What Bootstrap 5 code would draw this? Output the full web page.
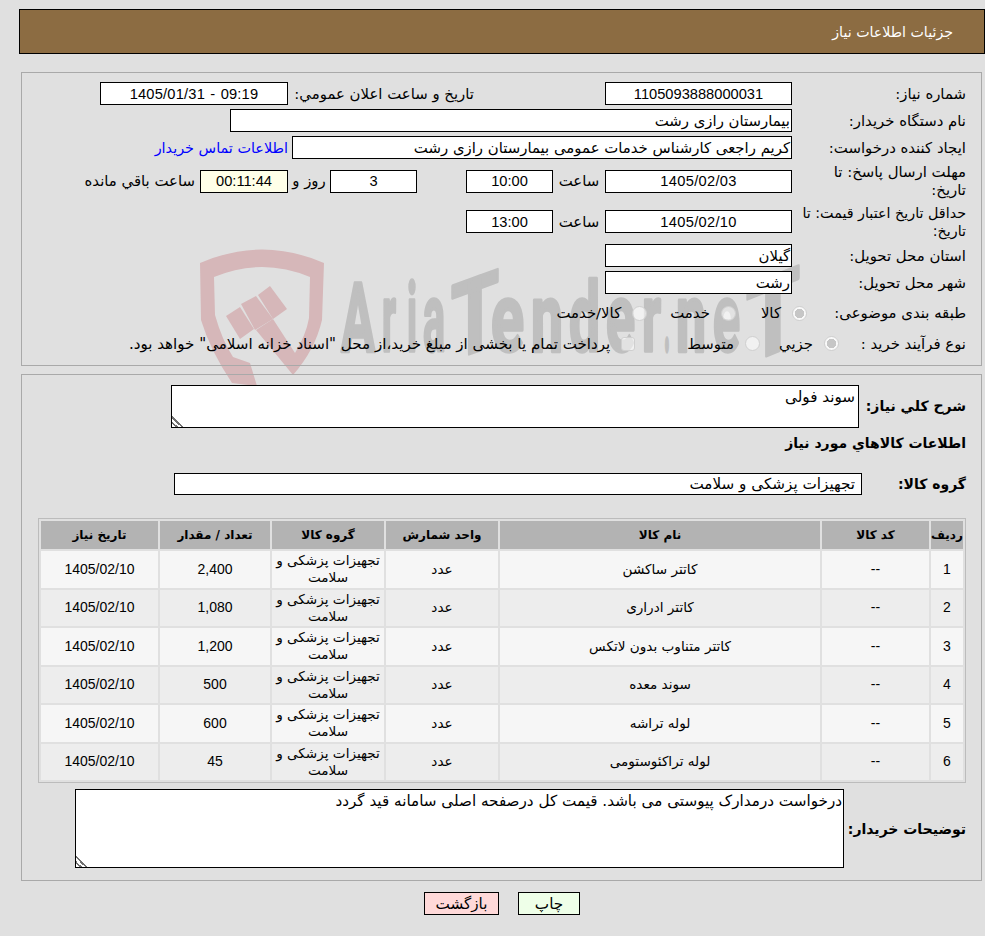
<!DOCTYPE html>
<html lang="fa" dir="rtl">
<head>
<meta charset="utf-8">
<title>جزئیات اطلاعات نیاز</title>
<link href="https://cdn.jsdelivr.net/npm/bootstrap@5.3.0/dist/css/bootstrap.min.css" rel="stylesheet">
<style>
html,body{background:#e0e0e0}
body{font-family:"DejaVu Sans",Tahoma,sans-serif;font-size:14.9px;line-height:18px;color:#000;position:relative;height:936px;overflow:hidden}
.wm{position:absolute;left:195px;top:245px;z-index:0}
.page{position:relative;z-index:1;padding-top:9px}
.headbar{margin:0 0 18px 0;margin-left:19px;height:45px;background:#8c6c42;border:1px solid #000;color:#fff;padding-right:31px;font-size:14.2px}
.panel1,.panel2{margin-left:21px;margin-right:3px;border:1px solid #a9a9a9;padding-right:15px}
.panel1{padding-top:9px;height:294px;margin-bottom:8px}
.panel2{height:507px;padding-top:10px}
.frow{gap:0;min-height:23px;margin-bottom:4px}
.lbl{width:163px;margin-left:11px;flex:none}
.lblw{width:174px;flex:none;font-size:14.3px}
.box{background:#fff;border:1px solid #000;height:23px;flex:none;display:flex;align-items:center;padding:0 1px;white-space:nowrap}
.num{font-size:14.67px;font-family:"Liberation Sans",sans-serif;justify-content:center}
.dt{letter-spacing:.3px}
.stamp{direction:ltr;word-spacing:1px;letter-spacing:.2px}
.b187{width:187px}.b87{width:87px}.b88{width:88px}.b188{width:188px}
.b562{width:562px}.b500{width:500px}
.tall4{height:36px}.tall5{height:37px}
.pub{margin-right:131px;width:186px;white-space:nowrap}
.hr{width:52px;text-align:center;flex:none}
.gap49{margin-left:49px}
.rz{width:42px;text-align:center;flex:none}
.ml5{margin-right:5px;white-space:nowrap}
.blue{color:#00f;text-decoration:none;margin-right:4px;white-space:nowrap;font-size:14.4px}
.timer{background:#ffffe8}
.r8{height:30px}.r9{height:22px;margin-bottom:0}
.lb8{width:159px;flex:none;white-space:nowrap}.lb9{width:127px;flex:none;white-space:nowrap}
.rad,.chk{appearance:none;-webkit-appearance:none;width:15px;height:15px;flex:none;margin:0;background:rgba(255,255,255,.55);border:1px solid #cfcfcf}
.rad{border-radius:50%}
.chk{border-radius:3px;width:14px;height:14px}
.rad:checked{background:radial-gradient(circle,#c6c6c6 0 4.5px,rgba(255,255,255,.8) 5px)}
.t{white-space:nowrap}
.m2{margin-right:11px}
.s82{margin-right:25px}.s83{margin-right:23px}
.s92{margin-right:19px}.s93{margin-right:52px}
.long{font-size:15.1px}
.bl{font-weight:700;font-size:14px;white-space:nowrap}
.ta{display:block;background:#fff;border:1px solid #000;border-radius:0;font:inherit;font-size:15.2px;color:#000;padding:2px;margin:0;outline:0;direction:rtl;flex:none}
.ta::-webkit-resizer{background:linear-gradient(45deg,transparent 0 12%,#707070 12% 20%,transparent 20% 30%,#707070 30% 38%,transparent 38%)}
.ta1{width:688px;height:43px;padding-right:3px}
.lbw{width:107px;flex:none;margin-top:-2px}
.head2{height:30px;margin-top:0}
.grow2{margin-top:15px;height:22px}
.lbg{width:104px;flex:none}
.grp{width:688px;height:22px;padding-right:6px;font-size:15.2px}
.tw{width:928px;margin:23px 0 0 0;border:1px solid #bcbcbc;border-collapse:separate;border-spacing:2px;table-layout:fixed}
.tw th{background:#b3b3b3;height:28px;padding:0;font-size:12px;text-align:center;vertical-align:middle}
.tw td{height:36.5px;padding:0;text-align:center;vertical-align:middle;font-size:13.6px;line-height:17px}
.tw tr.o td{background:#f6f6f6}
.tw tr.e td{background:#ededed}
.tw td.n{font-family:"Liberation Sans",sans-serif;font-size:14px}
.drow{margin-top:6px}
.ta2{width:769px;height:79px;padding:2px 1px}
.lbd{width:122px;flex:none;margin-top:0}
.btns{margin-top:11px;gap:19px;padding-left:19px}
.bt{height:23px;border:1px solid #000;border-radius:0;padding:0;font:inherit;font-size:15.2px;color:#000}
.bp{width:62px;background:#eeffe8}
.bb{width:75px;background:#ffd9d9}
</style>
</head>
<body>
<svg class="wm" width="620" height="145" viewBox="195 245 620 145" aria-hidden="true">
  <g fill="#d6b7b9">
    <path d="M200 263Q262 236 324 263L322 320Q315 350 293 375L256 330L273 319L295 353Q306 335 309 318L310 277Q262 257 214 277L215 315Q222 340 233 357L250 363L257 386L232 383Q210 350 201 320Z"/>
    <path d="M226 316L240 307L254 329L240 339Z"/>
    <path d="M241 304L256 296L273 319L255 330Z"/>
    <path d="M258 295L270 286L287 309L273 319Z"/>
  </g>
  <g fill="#bfbfbf" stroke="#bfbfbf" stroke-width="3.5" stroke-linejoin="round" font-family="Roboto,'Liberation Sans',sans-serif" font-weight="700" font-size="96">
    <text x="341" y="351" direction="ltr" textLength="34" lengthAdjust="spacingAndGlyphs">A</text>
    <text x="382" y="351" direction="ltr" textLength="14" lengthAdjust="spacingAndGlyphs">r</text>
    <text x="407" y="351" direction="ltr" textLength="10" lengthAdjust="spacingAndGlyphs">i</text>
    <text x="423" y="351" direction="ltr" textLength="22" lengthAdjust="spacingAndGlyphs">a</text>
    <text x="451" y="351" direction="ltr" font-size="104" textLength="48" lengthAdjust="spacingAndGlyphs" transform="translate(477 351) skewY(-20) translate(-477 -351)">T</text>
    <text x="491" y="351" direction="ltr" textLength="33" lengthAdjust="spacingAndGlyphs">e</text>
    <text x="531" y="351" direction="ltr" textLength="32" lengthAdjust="spacingAndGlyphs">n</text>
    <text x="569" y="351" direction="ltr" textLength="31" lengthAdjust="spacingAndGlyphs">d</text>
    <text x="606" y="351" direction="ltr" textLength="29" lengthAdjust="spacingAndGlyphs">e</text>
    <text x="642" y="351" direction="ltr" textLength="19" lengthAdjust="spacingAndGlyphs">r</text>
    <text x="664" y="351" direction="ltr" textLength="6" lengthAdjust="spacingAndGlyphs">.</text>
    <text x="676" y="351" direction="ltr" textLength="30" lengthAdjust="spacingAndGlyphs">n</text>
    <text x="713" y="351" direction="ltr" textLength="27" lengthAdjust="spacingAndGlyphs">e</text>
    <text x="746" y="351" direction="ltr" font-size="108" textLength="54" lengthAdjust="spacingAndGlyphs" transform="translate(778 351) skewY(-22) translate(-778 -351)">T</text>
  </g>
</svg>
<div class="page">
  <div class="headbar d-flex align-items-center">جزئیات اطلاعات نیاز</div>

  <div class="panel1">
    <div class="d-flex align-items-center frow">
      <div class="lbl">شماره نیاز:</div>
      <div class="box b187 num">1105093888000031</div>
      <div class="pub">تاریخ و ساعت اعلان عمومي:</div>
      <div class="box b188 num stamp">1405/01/31 - 09:19</div>
    </div>
    <div class="d-flex align-items-center frow">
      <div class="lbl">نام دستگاه خریدار:</div>
      <div class="box b562">بیمارستان رازی رشت</div>
    </div>
    <div class="d-flex align-items-center frow">
      <div class="lbl">ایجاد کننده درخواست:</div>
      <div class="box b500">کریم راجعی کارشناس خدمات عمومی بیمارستان رازی رشت</div>
      <a class="blue" href="#">اطلاعات تماس خریدار</a>
    </div>
    <div class="d-flex align-items-center frow tall4">
      <div class="lbl">مهلت ارسال پاسخ: تا تاریخ:</div>
      <div class="box b187 num dt">1405/02/03</div>
      <div class="hr">ساعت</div>
      <div class="box b87 num gap49">10:00</div>
      <div class="box b87 num">3</div>
      <div class="rz">روز و</div>
      <div class="box b88 num timer">00:11:44</div>
      <div class="ml5">ساعت باقي مانده</div>
    </div>
    <div class="d-flex align-items-center frow tall5">
      <div class="lblw">حداقل تاریخ اعتبار قیمت: تا تاریخ:</div>
      <div class="box b187 num dt">1405/02/10</div>
      <div class="hr">ساعت</div>
      <div class="box b87 num">13:00</div>
    </div>
    <div class="d-flex align-items-center frow">
      <div class="lbl">استان محل تحویل:</div>
      <div class="box b187">گیلان</div>
    </div>
    <div class="d-flex align-items-center frow">
      <div class="lbl">شهر محل تحویل:</div>
      <div class="box b187">رشت</div>
    </div>
    <div class="d-flex align-items-center frow r8">
      <div class="lb8">طبقه بندی موضوعی:</div>
      <input class="rad" type="radio" name="a" checked disabled>
      <span class="t m2">کالا</span>
      <input class="rad s82" type="radio" name="a" disabled>
      <span class="t m2">خدمت</span>
      <input class="rad s83" type="radio" name="a" disabled>
      <span class="t m2">کالا/خدمت</span>
    </div>
    <div class="d-flex align-items-center frow r9">
      <div class="lb9">نوع فرآیند خرید :</div>
      <input class="rad" type="radio" name="b" checked disabled>
      <span class="t m2">جزيي</span>
      <input class="rad s92" type="radio" name="b" disabled>
      <span class="t m2">متوسط</span>
      <input class="chk s93" type="checkbox" disabled>
      <span class="t m2 long">پرداخت تمام یا بخشی از مبلغ خرید،از محل "اسناد خزانه اسلامی" خواهد بود.</span>
    </div>
  </div>

  <div class="panel2">
    <div class="d-flex align-items-center">
      <div class="lbw bl">شرح کلي نياز:</div>
      <textarea class="ta ta1" readonly>سوند فولی</textarea>
    </div>
    <div class="head2 d-flex align-items-center bl">اطلاعات کالاهاي مورد نياز</div>
    <div class="d-flex align-items-center grow2">
      <div class="lbg bl">گروه کالا:</div>
      <div class="box grp">تجهیزات پزشکی و سلامت</div>
    </div>
    <table class="tw">
      <colgroup><col style="width:32px"><col style="width:107px"><col style="width:320px"><col style="width:112px"><col style="width:112px"><col style="width:110px"><col style="width:117px"></colgroup>
      <thead><tr><th>ردیف</th><th>کد کالا</th><th>نام کالا</th><th>واحد شمارش</th><th>گروه کالا</th><th>تعداد / مقدار</th><th>تاریخ نیاز</th></tr></thead>
      <tbody>
        <tr class="o"><td class="n">1</td><td class="n">--</td><td>کاتتر ساکشن</td><td>عدد</td><td>تجهیزات پزشکی و سلامت</td><td class="n">2,400</td><td class="n">1405/02/10</td></tr>
        <tr class="e"><td class="n">2</td><td class="n">--</td><td>کاتتر ادراری</td><td>عدد</td><td>تجهیزات پزشکی و سلامت</td><td class="n">1,080</td><td class="n">1405/02/10</td></tr>
        <tr class="o"><td class="n">3</td><td class="n">--</td><td>کاتتر متناوب بدون لاتکس</td><td>عدد</td><td>تجهیزات پزشکی و سلامت</td><td class="n">1,200</td><td class="n">1405/02/10</td></tr>
        <tr class="e"><td class="n">4</td><td class="n">--</td><td>سوند معده</td><td>عدد</td><td>تجهیزات پزشکی و سلامت</td><td class="n">500</td><td class="n">1405/02/10</td></tr>
        <tr class="o"><td class="n">5</td><td class="n">--</td><td>لوله تراشه</td><td>عدد</td><td>تجهیزات پزشکی و سلامت</td><td class="n">600</td><td class="n">1405/02/10</td></tr>
        <tr class="e"><td class="n">6</td><td class="n">--</td><td>لوله تراکئوستومی</td><td>عدد</td><td>تجهیزات پزشکی و سلامت</td><td class="n">45</td><td class="n">1405/02/10</td></tr>
      </tbody>
    </table>
    <div class="d-flex align-items-center drow">
      <div class="lbd bl">توضیحات خریدار:</div>
      <textarea class="ta ta2" readonly>درخواست درمدارک پیوستی می باشد. قیمت کل درصفحه اصلی سامانه قید گردد</textarea>
    </div>
  </div>

  <div class="d-flex justify-content-center btns">
    <button class="bt bp" type="button">چاپ</button>
    <button class="bt bb" type="button">بازگشت</button>
  </div>
</div>
<script src="https://cdn.jsdelivr.net/npm/bootstrap@5.3.0/dist/js/bootstrap.bundle.min.js"></script>
</body>
</html>
